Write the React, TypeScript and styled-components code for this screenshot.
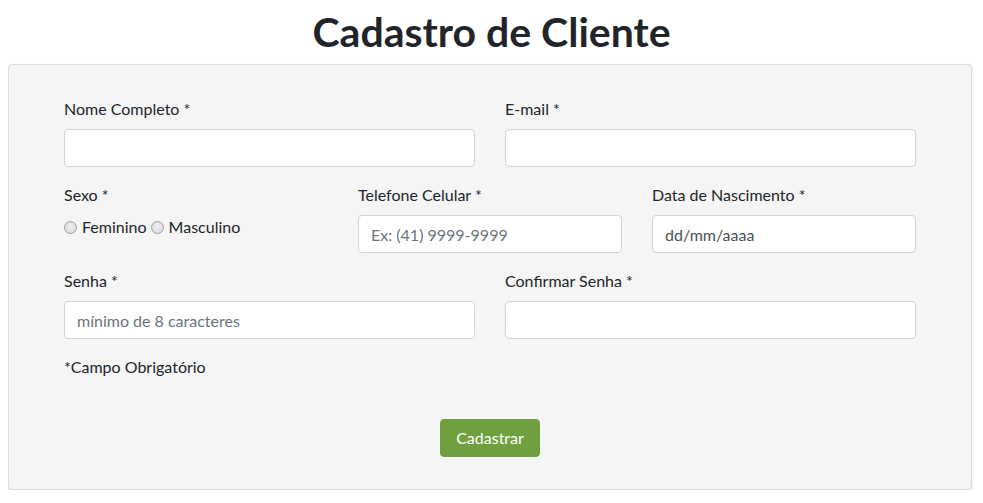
import React from "react";
import styled, { createGlobalStyle } from "styled-components";

const Global = createGlobalStyle`
  body {
    margin: 8px;
    background: #ffffff;
    font-family: Lato, "Liberation Sans", sans-serif;
    color: #212529;
  }
  * { box-sizing: border-box; }
`;

const Title = styled.h1`
  margin: 0 0 8px;
  font-size: 41px;
  line-height: 48px;
  font-weight: 700;
  text-align: center;
  color: #212529;
`;

const Panel = styled.form`
  margin-right: 3px;
  background: #f5f5f5;
  border: 1px solid #dcdcdc;
  border-radius: 4px;
  box-shadow: 0 1px 2px rgba(0, 0, 0, 0.15);
  padding: 32px 55px 32px;
`;

const Row = styled.div<{ $cols: number }>`
  display: grid;
  grid-template-columns: repeat(${(p) => p.$cols}, 1fr);
  column-gap: 30px;
`;

const Group = styled.div`
  margin-bottom: 16px;
`;

const Label = styled.label`
  display: block;
  font-size: 16px;
  line-height: 24px;
  margin-bottom: 8px;
`;

const Input = styled.input<{ $dark?: boolean }>`
  display: block;
  width: 100%;
  height: 38px;
  padding: 6px 12px;
  font-family: inherit;
  font-size: 16px;
  line-height: 24px;
  color: #495057;
  background: #fff;
  border: 1px solid #ced4da;
  border-radius: 4px;
  outline: none;
  &::placeholder {
    color: ${(p) => (p.$dark ? "#495057" : "#6c757d")};
    opacity: 1;
  }
`;

const RadioLine = styled.div`
  display: flex;
  align-items: center;
  font-size: 16px;
  line-height: 24px;
`;

const RadioOption = styled.label`
  display: inline-flex;
  align-items: center;
  gap: 5px;
  margin-right: 4px;
`;

const Radio = styled.input`
  appearance: none;
  width: 13px;
  height: 13px;
  margin: 0;
  border-radius: 50%;
  border: 1px solid #a0a0a0;
  background: radial-gradient(circle at 50% 40%, #f0f0f0 0%, #d6d6d6 100%);
`;

const Note = styled.p`
  margin: 0;
  font-size: 16px;
  line-height: 24px;
`;

const Actions = styled.div`
  display: flex;
  justify-content: center;
  margin-top: 40px;
`;

const Button = styled.button`
  width: 100px;
  height: 38px;
  padding: 6px 12px;
  font-family: inherit;
  font-size: 16px;
  line-height: 24px;
  color: #fff;
  background: #70a03e;
  border: 1px solid #70a03e;
  border-radius: 4px;
`;

export default function App() {
  return (
    <>
      <Global />
      <Title>Cadastro de Cliente</Title>
      <Panel onSubmit={(e) => e.preventDefault()}>
        <Row $cols={2}>
          <Group>
            <Label>Nome Completo *</Label>
            <Input type="text" />
          </Group>
          <Group>
            <Label>E-mail *</Label>
            <Input type="text" />
          </Group>
        </Row>
        <Row $cols={3}>
          <Group>
            <Label>Sexo *</Label>
            <RadioLine>
              <RadioOption>
                <Radio type="radio" name="sexo" />
                Feminino
              </RadioOption>
              <RadioOption>
                <Radio type="radio" name="sexo" />
                Masculino
              </RadioOption>
            </RadioLine>
          </Group>
          <Group>
            <Label>Telefone Celular *</Label>
            <Input type="text" placeholder="Ex: (41) 9999-9999" />
          </Group>
          <Group>
            <Label>Data de Nascimento *</Label>
            <Input type="text" placeholder="dd/mm/aaaa" $dark />
          </Group>
        </Row>
        <Row $cols={2}>
          <Group>
            <Label>Senha *</Label>
            <Input type="password" placeholder="mínimo de 8 caracteres" />
          </Group>
          <Group>
            <Label>Confirmar Senha *</Label>
            <Input type="password" />
          </Group>
        </Row>
        <Note>*Campo Obrigatório</Note>
        <Actions>
          <Button type="submit">Cadastrar</Button>
        </Actions>
      </Panel>
    </>
  );
}
